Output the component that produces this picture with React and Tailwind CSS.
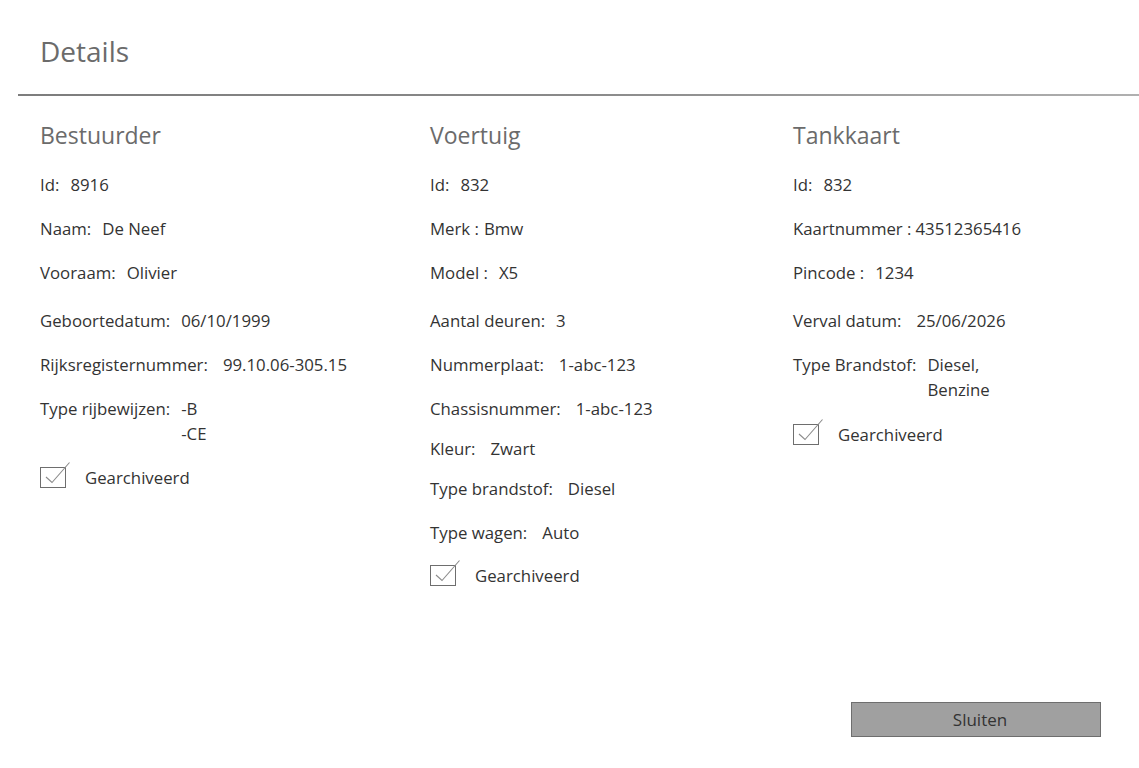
import React from "react";

const DRIVER = [
  { label: "Id:", value: "8916", mt: "mt-0" },
  { label: "Naam:", value: "De Neef", mt: "mt-5" },
  { label: "Vooraam:", value: "Olivier", mt: "mt-5" },
  { label: "Geboortedatum:", value: "06/10/1999", mt: "mt-6" },
  { label: "Rijksregisternummer:", value: "99.10.06-305.15", mt: "mt-5", gap: "gap-[15px]" },
  { label: "Type rijbewijzen:", value: ["-B", "-CE"], mt: "mt-5" },
];

const VEHICLE = [
  { label: "Id:", value: "832", mt: "mt-0" },
  { label: "Merk :", value: "Bmw", mt: "mt-5", gap: "gap-[5px]" },
  { label: "Model :", value: "X5", mt: "mt-5" },
  { label: "Aantal deuren:", value: "3", mt: "mt-6" },
  { label: "Nummerplaat:", value: "1-abc-123", mt: "mt-5", gap: "gap-[15px]" },
  { label: "Chassisnummer:", value: "1-abc-123", mt: "mt-5", gap: "gap-[15px]" },
  { label: "Kleur:", value: "Zwart", mt: "mt-4", gap: "gap-[15px]" },
  { label: "Type brandstof:", value: "Diesel", mt: "mt-4", gap: "gap-[15px]" },
  { label: "Type wagen:", value: "Auto", mt: "mt-5", gap: "gap-[15px]" },
];

const CARD = [
  { label: "Id:", value: "832", mt: "mt-0" },
  { label: "Kaartnummer :", value: "43512365416", mt: "mt-5", gap: "gap-[4px]" },
  { label: "Pincode :", value: "1234", mt: "mt-5" },
  { label: "Verval datum:", value: "25/06/2026", mt: "mt-6", gap: "gap-[15px]" },
  { label: "Type Brandstof:", value: ["Diesel,", "Benzine"], mt: "mt-5" },
];

function Checkbox() {
  return (
    <span className="relative inline-block h-[21px] w-[26px] border border-[#6e6e6e]">
      <svg className="absolute left-[-1px] top-[-1px] overflow-visible" width="26" height="21" fill="none">
        <path d="M6 10 L12 15.5 L29.5 -4.5" stroke="#8c8c8c" strokeWidth="1.1" />
      </svg>
    </span>
  );
}

function Field({ label, value, mt, gap = "gap-[11px]" }) {
  return (
    <div className={`flex ${gap} ${mt} text-[#333333]`}>
      <span className="leading-[24px]">{label}</span>
      {Array.isArray(value) ? (
        <div className="flex flex-col">
          {value.map((v, i) => (
            <span key={i} className={i === 0 ? "leading-[24px]" : "leading-[26px]"}>{v}</span>
          ))}
        </div>
      ) : (
        <span className="leading-[24px]">{value}</span>
      )}
    </div>
  );
}

function Section({ title, fields, width, archiveMt }) {
  return (
    <div className={`${width} flex flex-col`}>
      <h2 className="text-[23px] leading-[32px] text-[#6b6b6b]">{title}</h2>
      <div className="mt-[22px] flex flex-col">
        {fields.map((f) => (
          <Field key={f.label} {...f} />
        ))}
        <div className={`flex items-center gap-[19px] ${archiveMt} text-[#333333]`}>
          <Checkbox />
          <span className="leading-[24px]">Gearchiveerd</span>
        </div>
      </div>
    </div>
  );
}

export default function App() {
  return (
    <div className="flex min-h-[768px] flex-col bg-white text-[16.8px]" style={{ fontFamily: '"Open Sans", "Noto Sans", sans-serif' }}>
      <h1 className="ml-[40px] mt-[33px] text-[28px] leading-[36px] text-[#6b6b6b]">Details</h1>
      <div className="ml-[18px] mt-[25px] h-[1.5px] bg-gradient-to-r from-[#7d7d7d] via-[#8a8a8a] to-[#b0b0b0]" />
      <div className="mt-[23px] flex px-[40px]">
        <Section title="Bestuurder" fields={DRIVER} width="w-[390px]" archiveMt="mt-[19px]" />
        <Section title="Voertuig" fields={VEHICLE} width="w-[363px]" archiveMt="mt-[19px]" />
        <Section title="Tankkaart" fields={CARD} width="flex-1" archiveMt="mt-[20px]" />
      </div>
      <div className="mt-auto flex justify-end pb-[31px] pr-[38px]">
        <button type="button" className="h-[35px] w-[250px] border border-[#6e6e6e] bg-[#a0a0a0] pl-[8px] text-[17px] text-[#333333]">
          Sluiten
        </button>
      </div>
    </div>
  );
}
